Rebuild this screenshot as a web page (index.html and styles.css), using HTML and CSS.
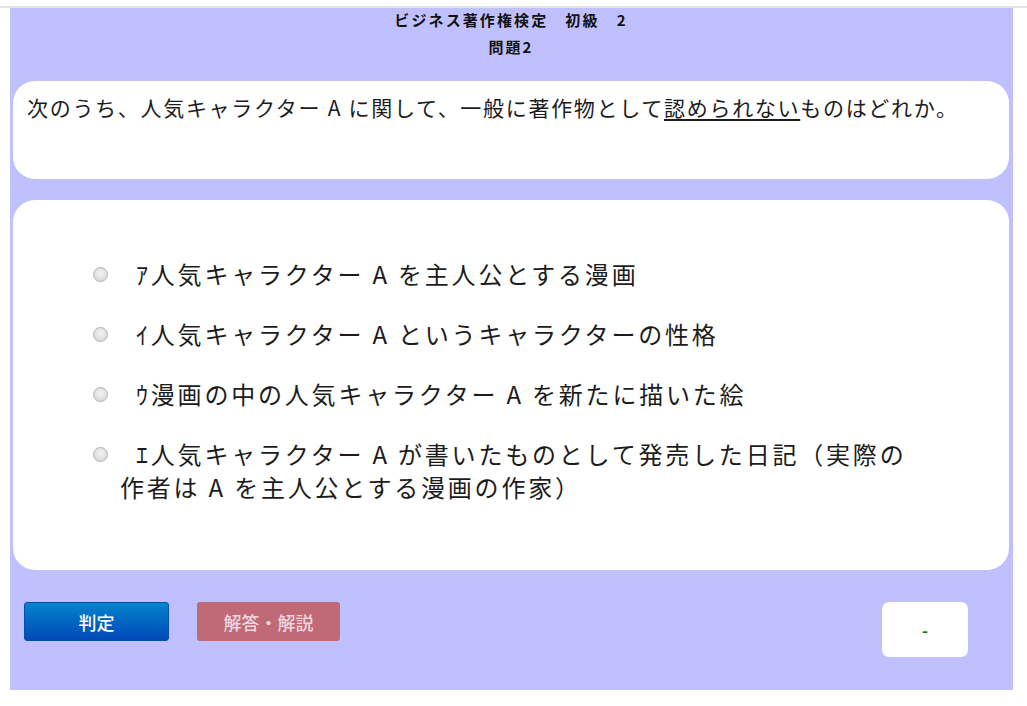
FILE: index.html
```html
<!DOCTYPE html>
<html lang="ja">
<head>
    <meta charset="UTF-8">
    <title>ビジネス著作権検定 初級 2 問題2</title>
    <link rel="stylesheet" href="styles.css">
</head>
<body>
    <div class="page">
        <div class="quiz">
            <!-- Kopfzeile -->
            <div class="quiz-head">
                <p class="quiz-title">ビジネス著作権検定　初級　2</p>
                <p class="quiz-no">問題2</p>
            </div>

            <!-- Frage -->
            <div class="panel question">
                次のうち、人気キャラクター A に関して、一般に著作物として<u>認められない</u>ものはどれか。
            </div>

            <!-- Antworten -->
            <div class="panel answers">
                <ul class="choices">
                    <li><label><input type="radio" name="q2" value="1">ｱ人気キャラクター A を主人公とする漫画</label></li>
                    <li><label><input type="radio" name="q2" value="2">ｲ人気キャラクター A というキャラクターの性格</label></li>
                    <li><label><input type="radio" name="q2" value="3">ｳ漫画の中の人気キャラクター A を新たに描いた絵</label></li>
                    <li><label><input type="radio" name="q2" value="4">ｴ人気キャラクター A が書いたものとして発売した日記（実際の作者は A を主人公とする漫画の作家）</label></li>
                </ul>
            </div>

            <!-- Buttons -->
            <div class="quiz-foot">
                <button class="btn btn-judge">判定</button>
                <button class="btn btn-answer">解答・解説</button>
                <div class="result">-</div>
            </div>
        </div>
    </div>
</body>
</html>
```

FILE: styles.css
```css
body {
    margin: 0;
    padding-top: 6px;
    background-color: #fff;
    font-family: "Noto Sans CJK JP", "Noto Sans", sans-serif;
    color: #1c1c1c;
}

.page {
    border-top: 2px solid #e2e2e2;
}

.quiz {
    background-color: #c0c0ff;
    margin-left: 10px;
    width: 1003px;
    height: 682px;
    padding: 0 4px 0 3px;
    box-sizing: border-box;
}

.quiz-head {
    text-align: center;
    font-weight: bold;
    font-size: 15px;
    letter-spacing: 2.1px;
    color: #111;
    padding-top: 2px;
    height: 73px;
    box-sizing: border-box;
}

.quiz-head p {
    margin: 0;
    line-height: 20px;
}

.quiz-head .quiz-no {
    margin-top: 7px;
}

.panel {
    background-color: #fff;
    border-radius: 22px;
}

.question {
    height: 98px;
    box-sizing: border-box;
    padding: 12px 14px;
    font-size: 21px;
    letter-spacing: 1.7px;
    line-height: 28px;
}

.question u {
    text-underline-offset: 3px;
}

.answers {
    margin-top: 21px;
    height: 370px;
    box-sizing: border-box;
    padding-top: 57px;
}

.choices {
    list-style: none;
    margin: 0;
    padding: 0 0 0 107px;
    width: 800px;
}

.choices li {
    font-size: 24px;
    letter-spacing: 2.8px;
    line-height: 33px;
    margin-bottom: 27px;
    text-indent: -27px;
}

/* alter grauer Radio-Button */
.choices input {
    appearance: none;
    width: 15px;
    height: 15px;
    margin: 0 28px 0 0;
    border: 1px solid #b4b4b4;
    border-radius: 50%;
    background: radial-gradient(circle at 50% 40%, #f4f4f4, #d0d0d0);
    vertical-align: 2px;
    text-indent: 0;
}

.quiz-foot {
    display: flex;
    align-items: flex-start;
    margin-top: 32px;
    padding-left: 11px;
}

.btn {
    width: 145px;
    height: 39px;
    border: none;
    border-radius: 3px;
    font-family: inherit;
    font-size: 18px;
    font-weight: 500;
    color: #fff;
    cursor: pointer;
}

.btn-judge {
    background: linear-gradient(#0584cc, #0048b8);
    border: 1px solid #0050b0;
}

.btn-answer {
    margin-left: 28px;
    width: 143px;
    background-color: #c06a78;
    color: #ecd6de;
}

.result {
    margin-left: 542px;
    width: 86px;
    height: 55px;
    background-color: #fff;
    border-radius: 7px;
    color: #008000;
    font-size: 16px;
    font-weight: bold;
    display: flex;
    align-items: center;
    justify-content: center;
}
```
